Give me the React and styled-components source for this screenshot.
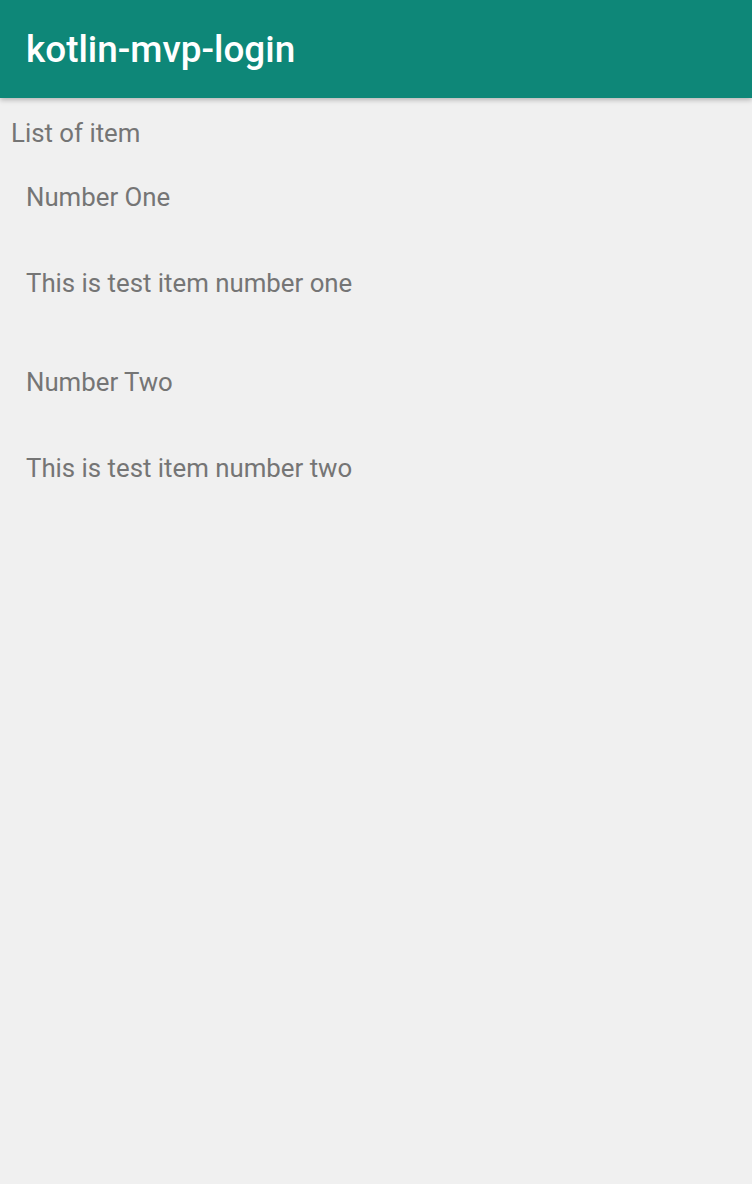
import React from 'react'
import styled, { createGlobalStyle } from 'styled-components'

const GlobalStyle = createGlobalStyle`
  html, body {
    margin: 0;
    padding: 0;
    background: #f0f0f0;
    font-family: Roboto, "Liberation Sans", sans-serif;
  }
`

const items = [
  { title: 'Number One', desc: 'This is test item number one' },
  { title: 'Number Two', desc: 'This is test item number two' },
]

const App = () => {
  return (
    <Page>
      <GlobalStyle />
      <Toolbar>
        <Title>kotlin-mvp-login</Title>
      </Toolbar>
      <Heading>List of item</Heading>
      <List>
        {items.map(item => (
          <Item key={item.title}>
            <ItemText>{item.title}</ItemText>
            <ItemText>{item.desc}</ItemText>
          </Item>
        ))}
      </List>
    </Page>
  )
}

const Page = styled.div`
  min-height: 1184px;
  background: #f0f0f0;
`
const Toolbar = styled.header`
  height: 98px;
  background: #0e8778;
  display: flex;
  align-items: center;
  padding: 0 26px;
  box-shadow: 0 2px 5px rgba(0, 0, 0, 0.25);
  position: relative;
`
const Title = styled.h1`
  margin: 0;
  color: #ffffff;
  font-size: 36.9px;
  font-weight: 500;
`
const Heading = styled.div`
  padding: 20px 11px 0;
  font-size: 25.8px;
  color: #757575;
  line-height: 30px;
`
const List = styled.div`
  display: flex;
  flex-direction: column;
`
const Item = styled.div`
  display: flex;
  flex-direction: column;
  gap: 56px;
  padding: 34px 26px 35px;
`
const ItemText = styled.div`
  font-size: 25.8px;
  color: #757575;
  line-height: 30px;
`

export default App
